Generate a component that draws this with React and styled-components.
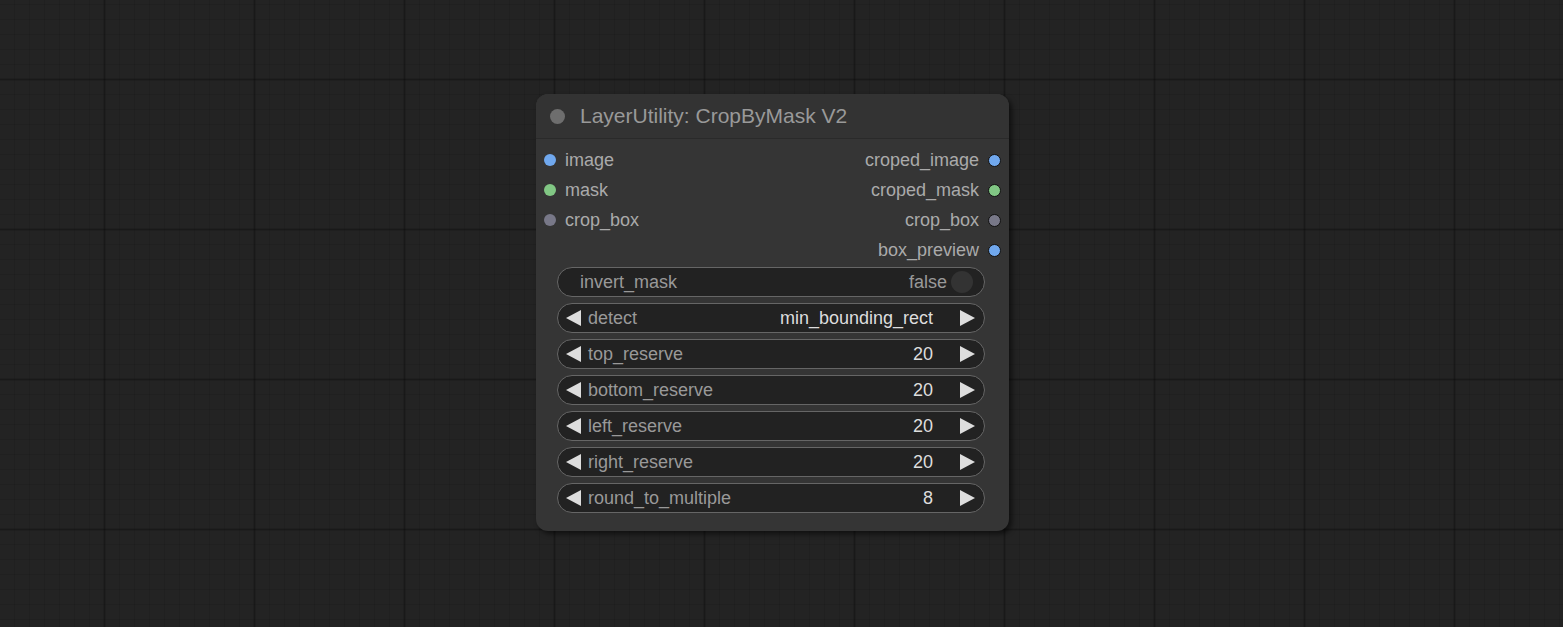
import React from 'react';
import styled, { createGlobalStyle } from 'styled-components';

const Global = createGlobalStyle`
	html, body {
		margin: 0;
		padding: 0;
		background: #222;
	}
	body {
		font-family: "Liberation Sans", Arial, sans-serif;
	}
`;

const Canvas = styled.div`
	position: relative;
	width: 1563px;
	height: 627px;
	overflow: hidden;
	background-color: #232323;
	background-image:
		linear-gradient(to right, rgba(0, 0, 0, 0.1) 0 1px, rgba(0, 0, 0, 0.22) 1px 2px, rgba(0, 0, 0, 0.1) 2px 3px, transparent 3px),
		linear-gradient(to bottom, rgba(0, 0, 0, 0.1) 0 1px, rgba(0, 0, 0, 0.22) 1px 2px, rgba(0, 0, 0, 0.1) 2px 3px, transparent 3px),
		linear-gradient(to right, rgba(0, 0, 0, 0.08) 0 1px, transparent 1px),
		linear-gradient(to bottom, rgba(0, 0, 0, 0.08) 0 1px, transparent 1px);
	background-size: 150px 150px, 150px 150px, 15px 15px, 15px 15px;
	background-position: 103px 78px, 103px 78px, 104px 79px, 104px 79px;
`;

const Node = styled.div`
	position: absolute;
	left: 536px;
	top: 94px;
	width: 473px;
	height: 437px;
	box-sizing: border-box;
	background: #353535;
	border-radius: 12px;
	box-shadow: 3px 3px 5px rgba(0, 0, 0, 0.55);
	display: flex;
	flex-direction: column;
`;

const Title = styled.div`
	height: 44px;
	display: flex;
	align-items: center;
	gap: 15px;
	padding-left: 14px;
	background: #333;
	border-radius: 12px 12px 0 0;
	border-bottom: 1px solid #2a2a2a;
	color: #999;
	font-size: 21px;
`;

const TitleDot = styled.span`
	width: 15px;
	height: 15px;
	border-radius: 50%;
	background: #6e6e6e;
`;

const Slots = styled.div`
	display: flex;
	justify-content: space-between;
	padding-top: 6px;
`;

const SlotColumn = styled.div`
	display: flex;
	flex-direction: column;
	align-items: ${(p) => (p.$out ? 'flex-end' : 'flex-start')};
`;

const Slot = styled.div`
	height: 30px;
	display: flex;
	align-items: center;
	gap: 9px;
	flex-direction: ${(p) => (p.$out ? 'row-reverse' : 'row')};
	padding: ${(p) => (p.$out ? '0 8px 0 0' : '0 0 0 8px')};
	color: #aaa;
	font-size: 18px;
`;

const SlotDot = styled.span`
	border-radius: 50%;
	background: ${(p) => p.$color};
	box-sizing: border-box;
	border: ${(p) => (p.$out ? '1.5px solid #111' : 'none')};
	width: ${(p) => (p.$out ? '13px' : '12px')};
	height: ${(p) => (p.$out ? '13px' : '12px')};
`;

const Widgets = styled.div`
	display: flex;
	flex-direction: column;
	gap: 6px;
	padding: 2px 24px 0 21px;
`;

const Widget = styled.div`
	height: 30px;
	box-sizing: border-box;
	border: 1px solid #666;
	border-radius: 15px;
	background: #222;
	display: flex;
	align-items: center;
	font-size: 18px;
	padding: ${(p) => (p.$toggle ? '0 11px 0 22px' : '0 9px 0 8px')};
`;

const Label = styled.span`
	color: #999;
	flex: 1;
	padding-left: ${(p) => (p.$toggle ? '0' : '7px')};
`;

const Value = styled.span`
	color: ${(p) => (p.$dim ? '#999' : '#ddd')};
	margin-right: ${(p) => (p.$toggle ? '4px' : '27px')};
`;

const Knob = styled.span`
	width: 22px;
	height: 22px;
	border-radius: 50%;
	background: #333;
`;

const Arrow = ({ dir }) => (
	<svg width="15" height="16" viewBox="0 0 15 16">
		{dir === 'left' ? (
			<polygon points="15,0 15,16 0,8" fill="#ddd" />
		) : (
			<polygon points="0,0 0,16 15,8" fill="#ddd" />
		)}
	</svg>
);

const inputs = [
	{ name: 'image', color: '#70a8ee' },
	{ name: 'mask', color: '#81c784' },
	{ name: 'crop_box', color: '#787888' },
];

const outputs = [
	{ name: 'croped_image', color: '#70a8ee' },
	{ name: 'croped_mask', color: '#81c784' },
	{ name: 'crop_box', color: '#787888' },
	{ name: 'box_preview', color: '#70a8ee' },
];

const combos = [
	{ name: 'detect', value: 'min_bounding_rect' },
	{ name: 'top_reserve', value: '20' },
	{ name: 'bottom_reserve', value: '20' },
	{ name: 'left_reserve', value: '20' },
	{ name: 'right_reserve', value: '20' },
	{ name: 'round_to_multiple', value: '8' },
];

export default function App() {
	return (
		<>
			<Global />
			<Canvas>
				<Node>
					<Title>
						<TitleDot />
						LayerUtility: CropByMask V2
					</Title>
					<Slots>
						<SlotColumn>
							{inputs.map((s) => (
								<Slot key={s.name}>
									<SlotDot $color={s.color} />
									{s.name}
								</Slot>
							))}
						</SlotColumn>
						<SlotColumn $out>
							{outputs.map((s) => (
								<Slot key={s.name} $out>
									<SlotDot $color={s.color} $out />
									{s.name}
								</Slot>
							))}
						</SlotColumn>
					</Slots>
					<Widgets>
						<Widget $toggle>
							<Label $toggle>invert_mask</Label>
							<Value $dim $toggle>false</Value>
							<Knob />
						</Widget>
						{combos.map((w) => (
							<Widget key={w.name}>
								<Arrow dir="left" />
								<Label>{w.name}</Label>
								<Value>{w.value}</Value>
								<Arrow dir="right" />
							</Widget>
						))}
					</Widgets>
				</Node>
			</Canvas>
		</>
	);
}
